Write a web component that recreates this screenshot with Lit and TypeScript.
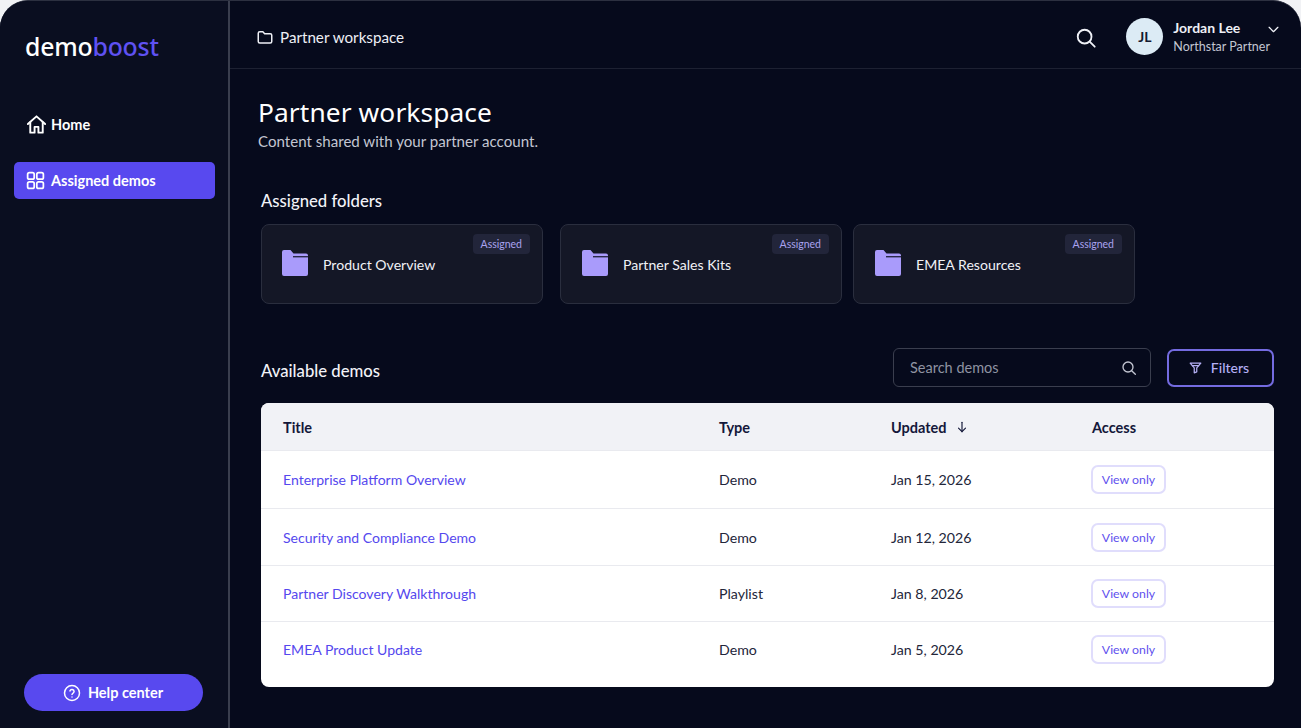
import { LitElement, html, css, svg } from "lit";
import { customElement } from "lit/decorators.js";

const icon = (body: unknown, size = 20, cls = "") => html`<svg class=${cls} width=${size} height=${size} viewBox="0 0 24 24" fill="none" stroke="currentColor" stroke-width="2" stroke-linecap="round" stroke-linejoin="round">${body}</svg>`;

const folderOutline = svg`<path d="M3 7a2 2 0 0 1 2-2h4.2l2.3 2.6H19a2 2 0 0 1 2 2V18a2 2 0 0 1-2 2H5a2 2 0 0 1-2-2z"/>`;
const home = svg`<path d="M3 11.5 12 3.5l9 8"/><path d="M5.5 9.5V20.5h4.5v-6h4v6h4.5V9.5"/>`;
const grid = svg`<rect x="3" y="3" width="7.5" height="7.5" rx="2"/><rect x="13.5" y="3" width="7.5" height="7.5" rx="2"/><rect x="3" y="13.5" width="7.5" height="7.5" rx="2"/><rect x="13.5" y="13.5" width="7.5" height="7.5" rx="2"/>`;
const search = svg`<circle cx="10.5" cy="10.5" r="7.5"/><path d="m16 16 5.5 5.5"/>`;
const chevron = svg`<path d="m5 8.5 7 7 7-7"/>`;
const help = svg`<circle cx="12" cy="12" r="10"/><path d="M9.2 9.2a2.9 2.9 0 0 1 5.6.9c0 1.9-2.8 2.5-2.8 4"/><path d="M12 17.4h.01"/>`;
const funnel = svg`<path d="M3.5 5h17l-6.5 7.5V19l-4 1.5v-8z"/><path d="M7 9h10"/>`;
const arrowDown = svg`<path d="M12 4v16"/><path d="m6 14 6 6 6-6"/>`;

const folders = ["Product Overview", "Partner Sales Kits", "EMEA Resources"];
const demos = [
  { title: "Enterprise Platform Overview", type: "Demo", updated: "Jan 15, 2026" },
  { title: "Security and Compliance Demo", type: "Demo", updated: "Jan 12, 2026" },
  { title: "Partner Discovery Walkthrough", type: "Playlist", updated: "Jan 8, 2026" },
  { title: "EMEA Product Update", type: "Demo", updated: "Jan 5, 2026" },
];

@customElement("app-root")
export class AppRoot extends LitElement {
  static styles = css`
    :host {
      display: block;
      width: 1301px;
      height: 728px;
      background: #f1f2f5;
      font-family: Lato, "Liberation Sans", sans-serif;
      overflow: hidden;
    }
    .frame {
      display: flex;
      height: 728px;
      box-sizing: border-box;
      border-top: 1px solid #2c3040;
      border-radius: 28px 28px 0 0;
      background: #060a1c;
      color: #fff;
      overflow: hidden;
    }
    .sidebar {
      width: 230px;
      flex: none;
      box-sizing: border-box;
      border-right: 2px solid #3a3e4e;
      background: #0a0e20;
      display: flex;
      flex-direction: column;
      padding: 30px 13px 17px 14px;
    }
    .logo {
      font-family: "Noto Sans", Lato, sans-serif;
      font-size: 24.8px;
      font-weight: 500;
      line-height: 30px;
      letter-spacing: -0.2px;
      padding-left: 11px;
      margin-bottom: 45px;
    }
    .logo span { color: #5f51f2; }
    .nav {
      display: flex;
      align-items: center;
      gap: 3px;
      height: 37px;
      padding-left: 11px;
      border-radius: 5px;
      font-size: 14.5px;
      font-weight: 700;
    }
    .nav + .nav { margin-top: 19px; }
    .nav.active { background: #5849ef; gap: 5px; }
    .help {
      margin: auto 12px 0 10px;
      height: 37px;
      border-radius: 19px;
      background: #5849ef;
      display: flex;
      align-items: center;
      justify-content: center;
      gap: 7px;
      padding-right: 1px;
      font-size: 14.5px;
      font-weight: 700;
    }
    .content { flex: 1; min-width: 0; }
    .topbar {
      height: 68px;
      box-sizing: border-box;
      border-bottom: 1px solid #1d2132;
      display: flex;
      align-items: center;
      padding: 0 20px 4px 26px;
      font-size: 15.2px;
      color: #eef0f6;
    }
    .crumb { display: flex; align-items: center; gap: 6px; flex: 1; margin-top: 8px; }
    .top-search { margin-right: 29px; margin-top: 11px; }
    .avatar {
      width: 37px;
      height: 37px;
      border-radius: 50%;
      background: #dcebf5;
      color: #141a30;
      display: flex;
      align-items: center;
      justify-content: center;
      font-size: 14px;
      font-weight: 700;
      margin-right: 10px;
      margin-top: 7px;
    }
    .user { margin-top: 10px; }
    .user b { display: block; font-size: 14px; line-height: 18px; }
    .user small { display: block; font-size: 12.5px; line-height: 19px; color: #c3c6d2; }
    .caret { align-self: flex-start; margin: 21px 0 0 -4px; }
    main { padding: 25px 27px 0 28px; }
    h1 { margin: 0; font-size: 26.3px; line-height: 36px; font-weight: 400; font-family: "Noto Sans", Lato, sans-serif; letter-spacing: 0.1px; }
    .sub { margin: 1px 0 0; font-size: 15.1px; line-height: 20px; color: #c3c6d2; }
    h2 { margin: 0; font-size: 16.7px; line-height: 22px; font-weight: 500; color: #f2f3f8; padding-left: 3px; }
    .assigned-title { margin-top: 39px; }
    .cards { display: flex; margin: 12px 0 0 3px; }
    .card {
      position: relative;
      width: 282px;
      height: 80px;
      box-sizing: border-box;
      border: 1px solid #2a2e3e;
      border-radius: 8px;
      background: #141726;
      display: flex;
      align-items: center;
      gap: 14px;
      padding-left: 19px;
      font-size: 14.1px;
      color: #f0f1f6;
    }
    .card:nth-child(2) { margin-left: 17px; padding-left: 20px; }
    .card:nth-child(3) { margin-left: 11px; padding-left: 20px; }
    .tag {
      position: absolute;
      top: 9px;
      right: 12px;
      height: 20px;
      padding: 0 8px;
      display: flex;
      align-items: center;
      border-radius: 4px;
      background: #22253a;
      color: #a9a3f0;
      font-size: 10.5px;
    }
    .bar { display: flex; align-items: center; margin-top: 44px; padding-right: 0; }
    .bar h2 { flex: 1; margin-top: 6px; }
    .searchbox {
      width: 258px;
      height: 39px;
      box-sizing: border-box;
      border: 1px solid #3a3e4e;
      border-radius: 6px;
      display: flex;
      align-items: center;
      justify-content: space-between;
      padding: 0 13px 0 16px;
      color: #8f93a2;
      font-size: 14.5px;
    }
    .searchbox svg { color: #c3c6d2; }
    .filters {
      width: 107px;
      height: 38px;
      box-sizing: border-box;
      margin-left: 16px;
      border: 2px solid #746be0;
      border-radius: 7px;
      display: flex;
      align-items: center;
      justify-content: center;
      gap: 8px;
      padding-right: 4px;
      font-size: 14px;
      font-weight: 500;
      color: #b5b0f5;
    }
    .table {
      margin: 16px 0 0 3px;
      width: 1013px;
      background: #fff;
      border-radius: 8px;
      overflow: hidden;
      color: #23263a;
      font-size: 14.2px;
    }
    .row {
      display: grid;
      box-sizing: border-box;
      grid-template-columns: 436px 172px 201px 1fr;
      align-items: center;
      padding-left: 22px;
      border-bottom: 1px solid #e9eaef;
      height: 57px;
    }
    .row:nth-child(2) { height: 58px; }
    .row:nth-child(4) { height: 56px; }
    .row:last-child { border-bottom: 0; height: 65px; padding-bottom: 11px; }
    .row.head {
      height: 48px;
      padding-top: 1px;
      background: #f1f2f6;
      color: #14183a;
      font-size: 14.5px;
      font-weight: 700;
    }
    .updated { display: flex; align-items: center; gap: 8px; }
    .link { color: #5548ee; font-size: 14.05px; }
    .pill-cell { display: flex; margin-left: -1px; }
    .pill {
      display: inline-flex;
      align-items: center;
      justify-content: center;
      width: 75px;
      height: 29px;
      box-sizing: border-box;
      border: 2px solid #e0ddfc;
      border-radius: 7px;
      color: #5f52ee;
      font-size: 12.3px;
    }
  `;

  render() {
    return html`
      <div class="frame">
        <aside class="sidebar">
          <div class="logo">demo<span>boost</span></div>
          <div class="nav">${icon(home, 23)}Home</div>
          <div class="nav active">${icon(grid, 21)}Assigned demos</div>
          <div class="help">${icon(help, 18)}Help center</div>
        </aside>
        <div class="content">
          <header class="topbar">
            <div class="crumb">${icon(folderOutline, 18)}Partner workspace</div>
            ${icon(search, 22, "top-search")}
            <div class="avatar">JL</div>
            <div class="user"><b>Jordan Lee</b><small>Northstar Partner</small></div>
            ${icon(chevron, 15, "caret")}
          </header>
          <main>
            <h1>Partner workspace</h1>
            <p class="sub">Content shared with your partner account.</p>
            <h2 class="assigned-title">Assigned folders</h2>
            <div class="cards">
              ${folders.map(
                (name) => html`
                  <div class="card">
                    <svg width="28" height="28" viewBox="0 0 28 28">
                      <path fill="#a99bfb" d="M1 2a2 2 0 0 1 2-2h6.5l3 3.5H25a2 2 0 0 1 2 2V24a2 2 0 0 1-2 2H3a2 2 0 0 1-2-2z" />
                      <path fill="#2a2a4a" d="M12 6h15v1.4H12z" />
                    </svg>
                    ${name}
                    <span class="tag">Assigned</span>
                  </div>
                `
              )}
            </div>
            <div class="bar">
              <h2>Available demos</h2>
              <div class="searchbox">Search demos ${icon(search, 16)}</div>
              <div class="filters">${icon(funnel, 15)}Filters</div>
            </div>
            <div class="table">
              <div class="row head">
                <span>Title</span>
                <span>Type</span>
                <span class="updated">Updated ${icon(arrowDown, 14)}</span>
                <span>Access</span>
              </div>
              ${demos.map(
                (d) => html`
                  <div class="row">
                    <span class="link">${d.title}</span>
                    <span>${d.type}</span>
                    <span>${d.updated}</span>
                    <span class="pill-cell"><span class="pill">View only</span></span>
                  </div>
                `
              )}
            </div>
          </main>
        </div>
      </div>
    `;
  }
}
